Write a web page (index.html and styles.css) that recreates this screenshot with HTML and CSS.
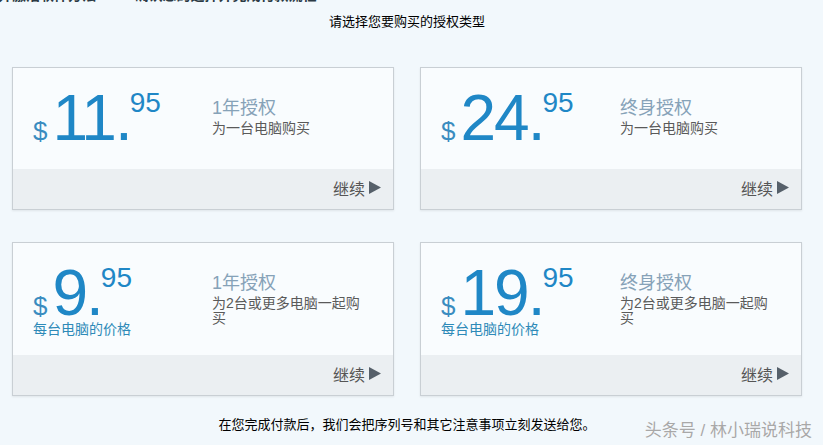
FILE: index.html
```html
<!DOCTYPE html>
<html>
	<head>
		<title>选择授权类型</title>
		<meta name="viewport" content="width=device-width, initial-scale=1" />
		<link rel="stylesheet" href="styles.css">
	</head>
	<body>
		<div class="topline">
			<span class="seg seg-a">购买并激活软件方法</span>
			<span class="seg seg-b">确认您的选择并完成付款流程</span>
		</div>
		<main class="page">
			<h1 class="intro">请选择您要购买的授权类型</h1>
			<div class="plans">
				<div class="card">
					<div class="card-body">
						<div class="price">
							<span class="cur">$</span><span class="int">11.</span><span class="cents">95</span>
						</div>
						<div class="info">
							<h2>1年授权</h2>
							<p>为一台电脑购买</p>
						</div>
					</div>
					<div class="card-foot">继续 <svg width="12" height="13" viewBox="0 0 12 13"><polygon points="0,0 12,6.5 0,13" /></svg></div>
				</div>
				<div class="card">
					<div class="card-body">
						<div class="price">
							<span class="cur">$</span><span class="int">24.</span><span class="cents">95</span>
						</div>
						<div class="info">
							<h2>终身授权</h2>
							<p>为一台电脑购买</p>
						</div>
					</div>
					<div class="card-foot">继续 <svg width="12" height="13" viewBox="0 0 12 13"><polygon points="0,0 12,6.5 0,13" /></svg></div>
				</div>
				<div class="card">
					<div class="card-body">
						<div class="price">
							<span class="cur">$</span><span class="int">9.</span><span class="cents">95</span>
							<small>每台电脑的价格</small>
						</div>
						<div class="info">
							<h2>1年授权</h2>
							<p>为2台或更多电脑一起购买</p>
						</div>
					</div>
					<div class="card-foot">继续 <svg width="12" height="13" viewBox="0 0 12 13"><polygon points="0,0 12,6.5 0,13" /></svg></div>
				</div>
				<div class="card">
					<div class="card-body">
						<div class="price">
							<span class="cur">$</span><span class="int">19.</span><span class="cents">95</span>
							<small>每台电脑的价格</small>
						</div>
						<div class="info">
							<h2>终身授权</h2>
							<p>为2台或更多电脑一起购买</p>
						</div>
					</div>
					<div class="card-foot">继续 <svg width="12" height="13" viewBox="0 0 12 13"><polygon points="0,0 12,6.5 0,13" /></svg></div>
				</div>
			</div>
			<p class="note">在您完成付款后，我们会把序列号和其它注意事项立刻发送给您。</p>
		</main>
		<div class="watermark">头条号 / 林小瑞说科技</div>
	</body>
</html>
```

FILE: styles.css
```css
* { box-sizing: border-box; }
body {
	margin: 0;
	background: #f2f8fc;
	font-family: "Liberation Sans", "Noto Sans CJK SC", sans-serif;
	color: #000;
}
h1, h2, p { margin: 0; padding: 0; font-weight: normal; }

.topline {
	height: 4px;
	overflow: hidden;
	white-space: nowrap;
}
.topline .seg {
	display: inline-block;
	margin-top: -12px;
	font-size: 14px;
	line-height: 14px;
	font-weight: bold;
	color: #2b3a44;
	vertical-align: top;
}
.topline .seg-a { margin-left: -30px; }
.topline .seg-b { margin-left: 34px; }

.page {
	width: 790px;
	margin-left: 12px;
}
.intro {
	margin-top: 9px;
	font-size: 13px;
	line-height: 18px;
	text-align: center;
}

.plans {
	display: grid;
	grid-template-columns: 382px 382px;
	column-gap: 26px;
	row-gap: 32px;
	margin-top: 36px;
}
.card {
	border: 1px solid #c9cfd4;
	background: #f9fcfe;
	box-shadow: 0 1px 2px rgba(0, 0, 0, 0.08);
}
.card-body {
	display: flex;
	align-items: flex-start;
	min-height: 101px;
	padding: 22px 20px 18px;
}
.price {
	width: 179px;
	color: #1f87c6;
	font-size: 64px;
	line-height: 56px;
	white-space: nowrap;
}
.price .cur {
	font-size: 26px;
	line-height: 0;
	color: #3a8cc0;
	margin-right: 5px;
}
.price .int {
	letter-spacing: -2px;
}
.price .cents {
	font-size: 28px;
	line-height: 0;
	vertical-align: 28px;
	margin-left: -1px;
}
.price small {
	display: block;
	font-size: 14px;
	line-height: 16px;
	color: #2e8ab8;
}
.info {
	width: 152px;
	padding-top: 5px;
}
.info h2 {
	font-size: 18px;
	line-height: 26px;
	color: #86a2b8;
}
.info p {
	font-size: 14px;
	line-height: 15px;
	color: #5a5a5a;
}
.card-foot {
	display: flex;
	justify-content: flex-end;
	align-items: center;
	gap: 4px;
	height: 40px;
	padding: 0 12px 3px;
	background: #ebeff2;
	font-size: 16px;
	color: #555;
}
.card-foot svg { fill: #56606a; }

.note {
	margin-top: 20px;
	font-size: 13px;
	line-height: 18px;
	text-align: center;
}

.watermark {
	position: absolute;
	right: 11px;
	top: 420px;
	font-size: 17px;
	line-height: 22px;
	color: #a8a8a8;
	text-shadow: 0 0 1px #fff;
}
```
